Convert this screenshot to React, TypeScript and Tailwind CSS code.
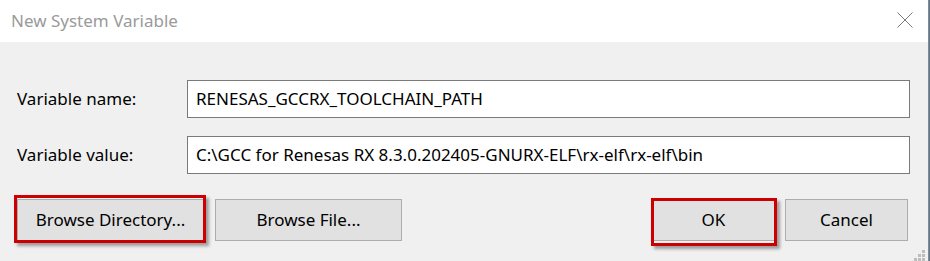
import React from "react";

const FONT = { fontFamily: '"Noto Sans", "Open Sans", Arial, sans-serif' };

function RedMark({ className }: { className: string }) {
  // hand-drawn annotation box that sits over a button
  return (
    <span
      className={`pointer-events-none absolute border-[3px] border-[#cc0000] shadow-[3px_3px_3px_rgba(0,0,0,0.35)] ${className}`}
    />
  );
}

function Btn({ label, width, mark }: { label: string; width: string; mark?: string }) {
  return (
    <button
      className={`relative h-[42px] ${width} border border-[#adadad] bg-[#e1e1e1] text-[17px] text-black`}
    >
      {label}
      {mark && <RedMark className={mark} />}
    </button>
  );
}

function Field({ label, value }: { label: string; value: string }) {
  return (
    <div className="flex items-center">
      <label className="w-[170px] text-[17px] text-black">{label}</label>
      <div className="flex h-[38px] flex-1 items-center border border-[#7a7a7a] bg-white pl-[8px] text-[17px] text-black">
        {value}
      </div>
    </div>
  );
}

export default function App() {
  return (
    <div className="relative flex h-[261px] w-[930px] overflow-hidden bg-[#f0f0f0]" style={FONT}>
      <div className="flex w-[929px] flex-col border-r border-[#8a8a8a]">
        {/* title bar */}
        <div className="flex h-[42px] items-center justify-between bg-white pl-[11px] pr-[15px]">
          <span className="text-[17px] text-[#9a9a9a]">New System Variable</span>
          <svg width="16" height="16" viewBox="0 0 16 16" className="mt-[-2px]">
            <path d="M0.5 0.5 L15.5 15.5 M15.5 0.5 L0.5 15.5" stroke="#7a7a7a" strokeWidth="1" />
          </svg>
        </div>

        <div className="flex flex-1 flex-col bg-[#f0f0f0] pl-[17px] pr-[18px] pt-[38px]">
          <div className="flex flex-col gap-[18px]">
            <Field label="Variable name:" value="RENESAS_GCCRX_TOOLCHAIN_PATH" />
            <Field
              label="Variable value:"
              value="C:\GCC for Renesas RX 8.3.0.202405-GNURX-ELF\rx-elf\rx-elf\bin"
            />
          </div>

          <div className="mt-[25px] flex items-center pr-[2px]">
            <div className="flex gap-[11px]">
              <Btn
                label="Browse Directory..."
                width="w-[187px]"
                mark="left-[-4px] top-[-5px] h-[48px] w-[192px]"
              />
              <Btn label="Browse File..." width="w-[187px]" />
            </div>
            <div className="ml-auto flex gap-[10px]">
              <Btn label="OK" width="w-[123px]" mark="left-[-2px] top-[-2px] h-[48px] w-[126px]" />
              <Btn label="Cancel" width="w-[123px]" />
            </div>
          </div>
        </div>
      </div>
      <div className="w-[1px] bg-[#5a7796]" />

      {/* resize grip */}
      <svg width="14" height="12" viewBox="0 0 14 12" className="absolute bottom-0 right-[2px]">
        {[
          [8, 0],
          [4, 4],
          [8, 4],
          [0, 8],
          [4, 8],
          [8, 8],
        ].map(([x, y]) => (
          <rect key={`${x}-${y}`} x={x} y={y + 1} width="3" height="3" fill="#bdbdbd" />
        ))}
      </svg>
    </div>
  );
}
